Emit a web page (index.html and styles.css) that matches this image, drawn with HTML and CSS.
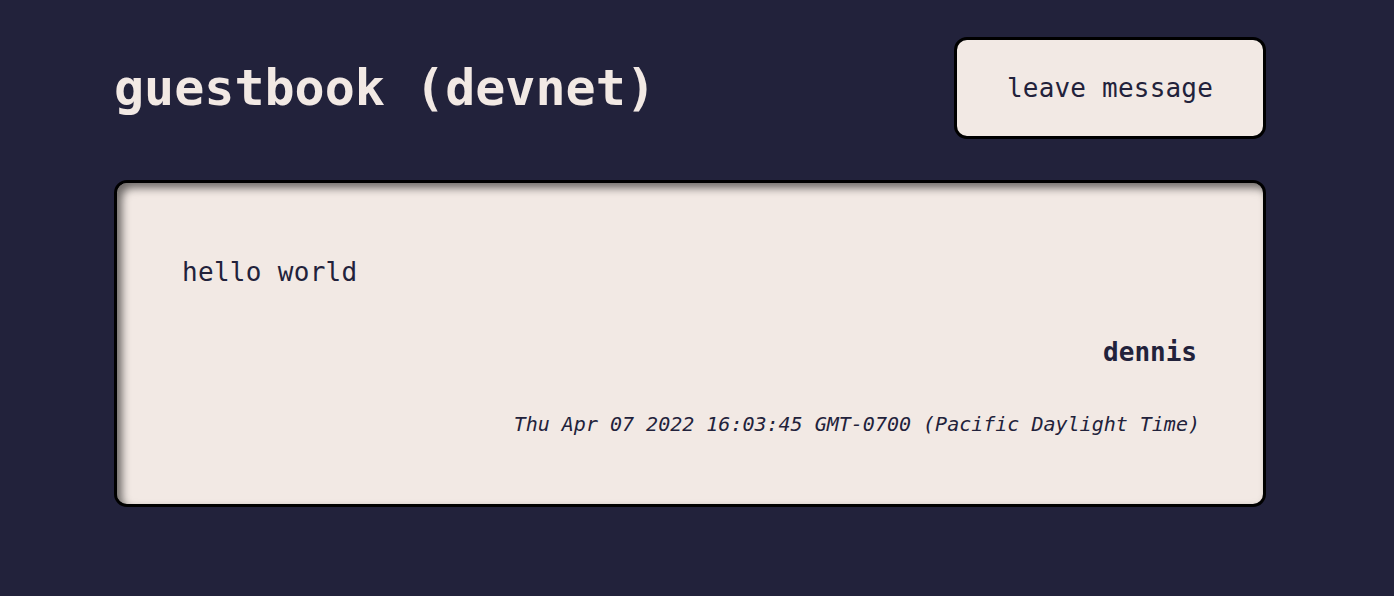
FILE: index.html
```html
<!DOCTYPE html>
<html>
<head>
<meta charset="utf-8">
<link rel="stylesheet" href="styles.css">
</head>
<body>
<div class="page">
  <header class="header">
    <h1 class="title">guestbook (devnet)</h1>
    <button class="btn">leave message</button>
  </header>
  <section class="card">
    <p class="msg">hello world</p>
    <p class="author">dennis</p>
    <p class="date">Thu Apr 07 2022 16:03:45 GMT-0700 (Pacific Daylight Time)</p>
  </section>
</div>
</body>
</html>
```
FILE: styles.css
```css
html, body {
  margin: 0;
  padding: 0;
  background: #22223b;
}
body {
  font-family: "DejaVu Sans Mono", "Liberation Mono", monospace;
  color: #22223b;
}
.page {
  width: 1152px;
  padding: 37px 0 0 114px;
}
.header {
  display: flex;
  justify-content: space-between;
  align-items: center;
  height: 102px;
}
.title {
  margin: 0;
  font-size: 50px;
  font-weight: bold;
  color: #f2e9e4;
}
.btn {
  box-sizing: border-box;
  width: 312px;
  height: 102px;
  background: #f2e9e4;
  border: 3px solid #000;
  border-radius: 13px;
  font-family: inherit;
  font-size: 26px;
  letter-spacing: 0.2px;
  color: #22223b;
  padding: 0;
}
.card {
  box-sizing: border-box;
  margin-top: 41px;
  height: 327px;
  background: #f2e9e4;
  border: 3px solid #000;
  border-radius: 13px;
  box-shadow: inset 5px 5px 8px rgba(0, 0, 0, 0.55);
  padding: 69px 66px 0 65px;
  display: flex;
  flex-direction: column;
}
.msg {
  margin: 0;
  font-size: 26px;
  line-height: 40px;
  letter-spacing: 0.3px;
}
.author {
  margin: 40px 0 0;
  text-align: right;
  font-size: 26px;
  font-weight: bold;
  line-height: 40px;
}
.date {
  margin: 37px -3px 0 0;
  text-align: right;
  font-size: 20px;
  font-style: italic;
  line-height: 30px;
}
```
